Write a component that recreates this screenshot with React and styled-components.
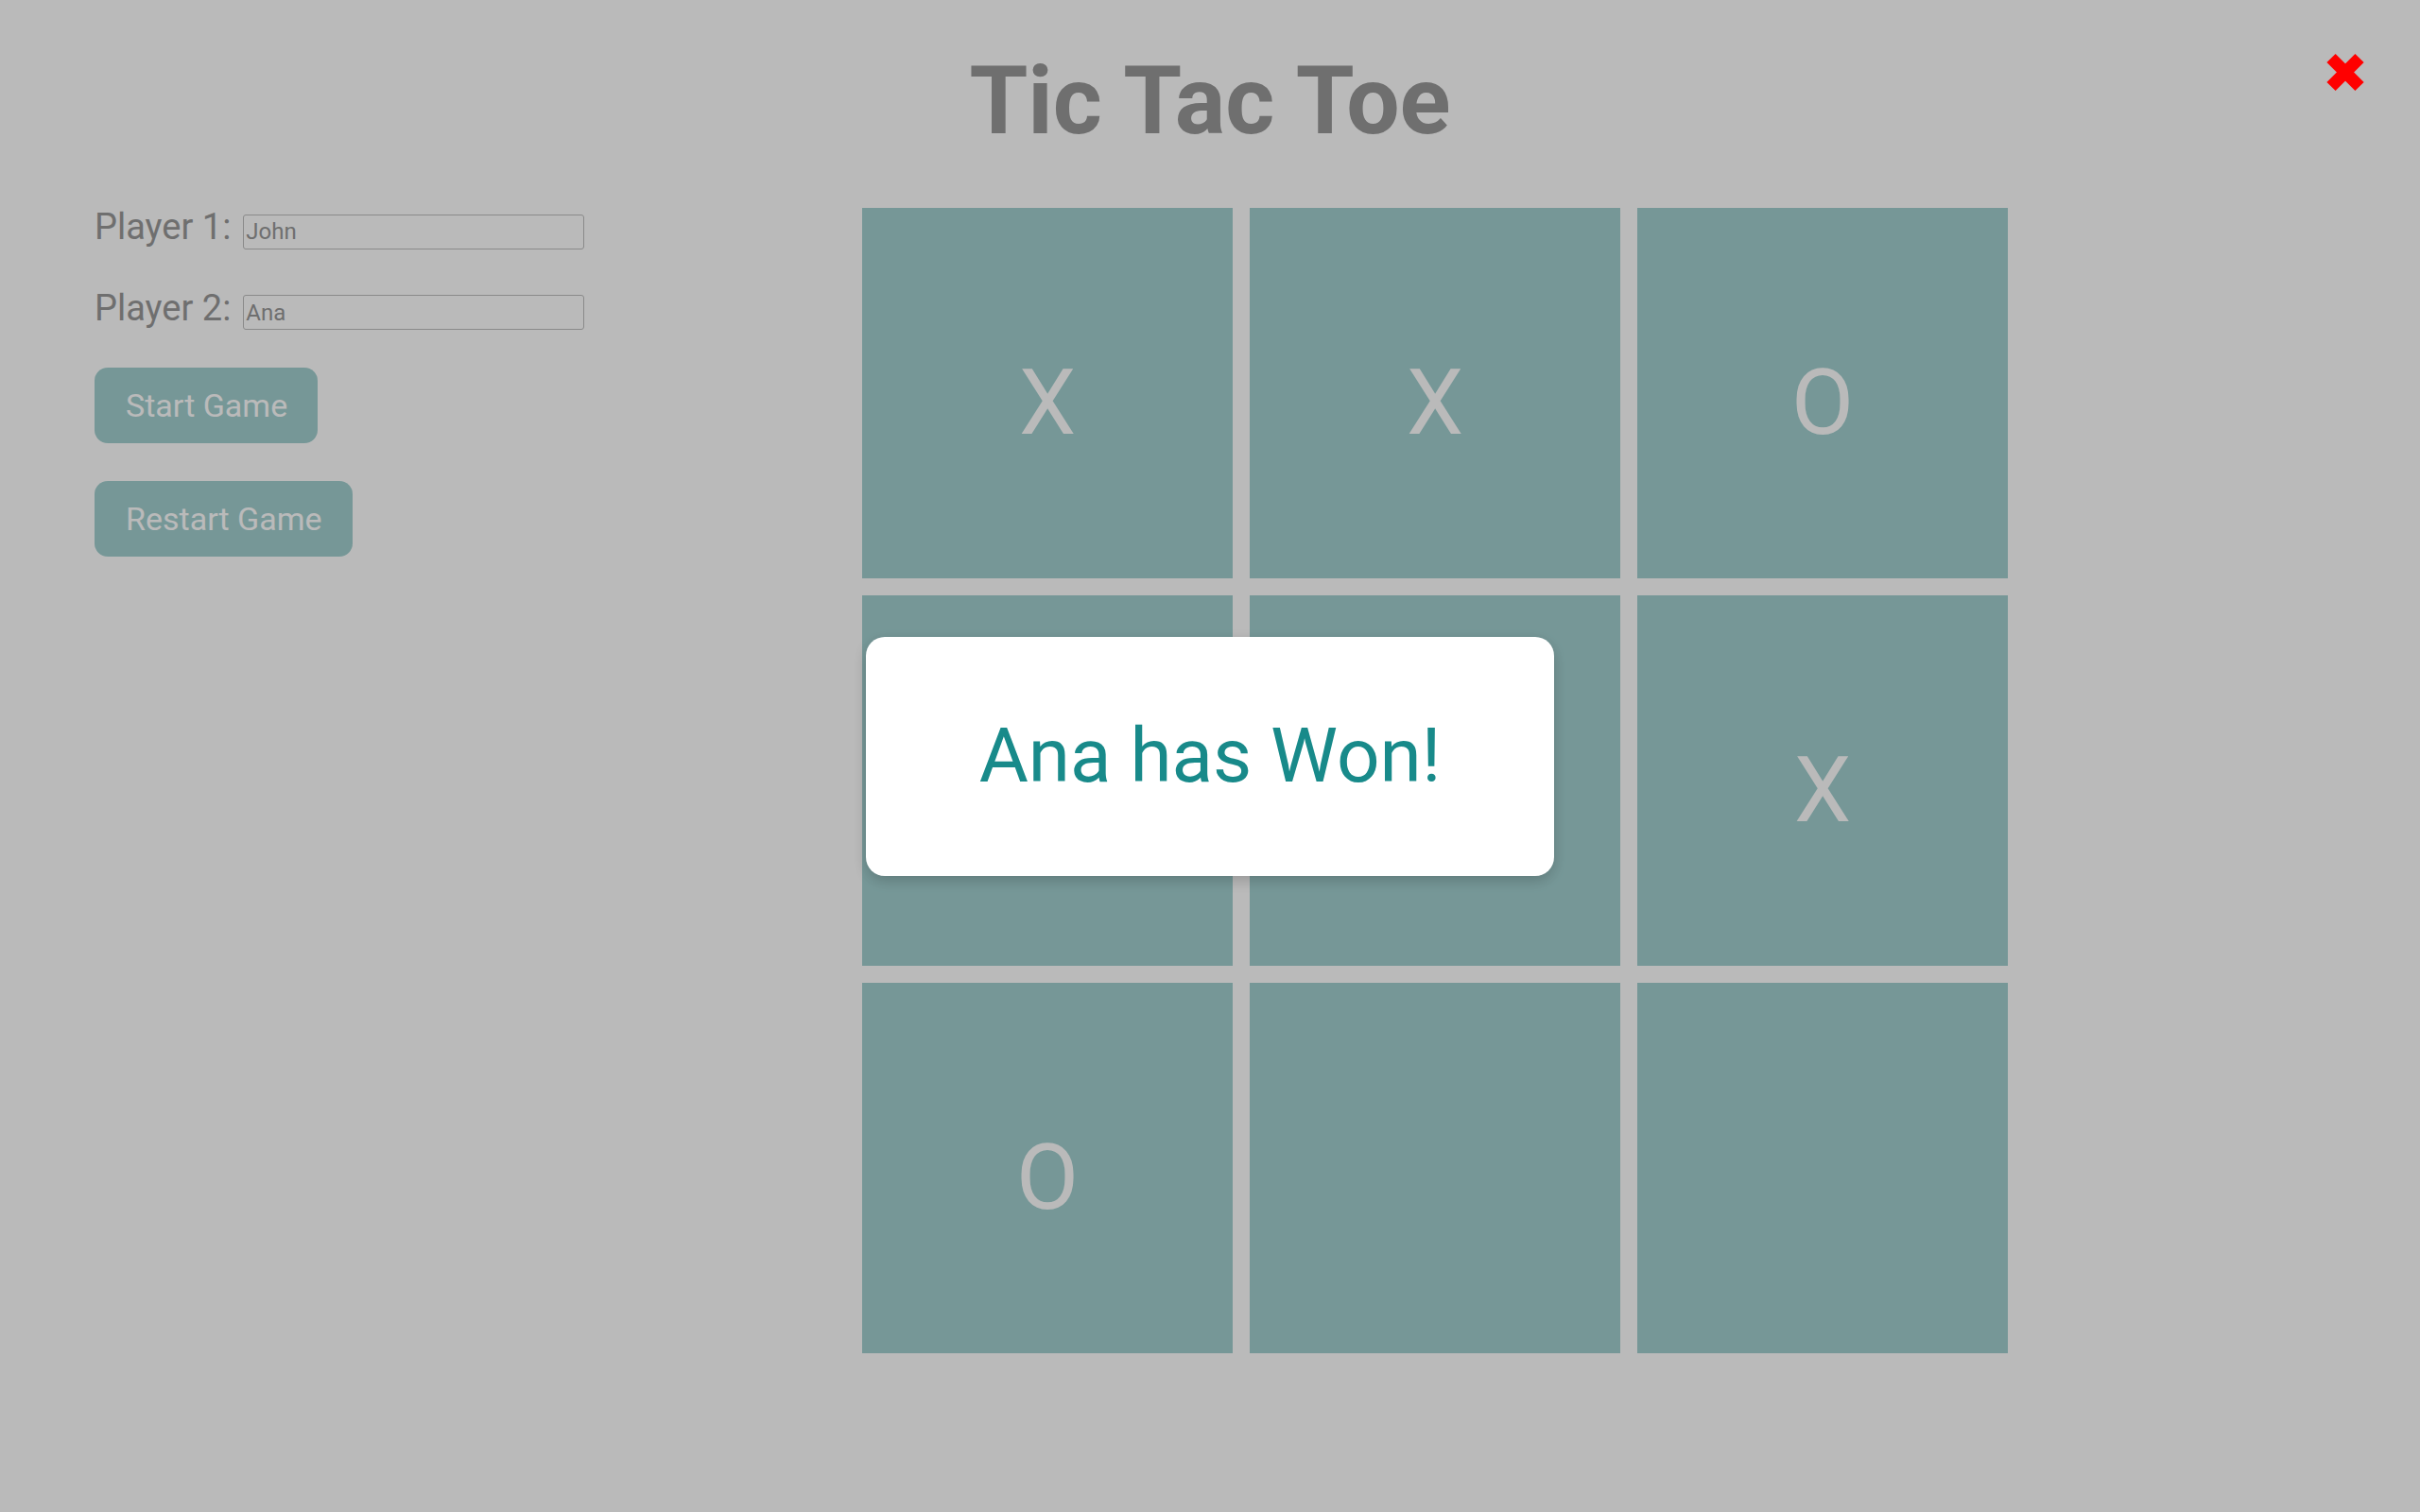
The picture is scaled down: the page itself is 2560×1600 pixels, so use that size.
import React, { useState } from "react";
import styled, { createGlobalStyle } from "styled-components";

const GlobalStyle = createGlobalStyle`
  html, body {
    margin: 0;
    padding: 0;
    background: #ffffff;
  }
  body {
    font-family: Roboto, "Noto Sans", Arial, sans-serif;
  }
`;

const Page = styled.div`
  min-height: 100vh;
`;

const Header = styled.header`
  display: flex;
  justify-content: center;
  padding-top: 48px;
`;

const Title = styled.h1`
  margin: 0;
  font-size: 100px;
  font-weight: 700;
  line-height: normal;
  color: #999999;
`;

const Main = styled.main`
  display: flex;
  align-items: flex-start;
  padding: 55px 0 0 100px;
`;

const Sidebar = styled.div`
  width: 812px;
  margin-top: -2px;
  display: flex;
  flex-direction: column;
  align-items: flex-start;
  gap: 40px;
`;

const PlayerRow = styled.div`
  display: flex;
  align-items: baseline;
  gap: 13px;
`;

const Label = styled.label`
  font-size: 38px;
  color: #999999;
`;

const NameInput = styled.input`
  box-sizing: border-box;
  width: 361px;
  height: 37px;
  padding: 3px 2px;
  border: 1px solid #bdbdbd;
  border-radius: 3px;
  background: transparent;
  font-family: Roboto, "Noto Sans", Arial, sans-serif;
  font-size: 24px;
  color: #999999;
  outline: none;
`;

const Button = styled.button`
  border: none;
  border-radius: 14px;
  padding: 20px 32px 20px 33px;
  background: #a2d0d0;
  color: #ffffff;
  font-family: Roboto, "Noto Sans", Arial, sans-serif;
  font-size: 34px;
  line-height: normal;
  cursor: pointer;
`;

const Board = styled.div`
  display: grid;
  grid-template-columns: repeat(3, 392px);
  grid-auto-rows: 392px;
  gap: 18px;
`;

const Cell = styled.div`
  box-sizing: border-box;
  display: flex;
  align-items: center;
  justify-content: center;
  padding-top: 20px;
  background: #a2d0d0;
  color: #ffffff;
  font-size: 96px;
`;

const Overlay = styled.div`
  position: fixed;
  inset: 0;
  background: rgba(0, 0, 0, 0.27);
  display: flex;
  align-items: center;
  justify-content: center;
`;

const Modal = styled.div`
  width: 728px;
  height: 253px;
  border-radius: 20px;
  background: #ffffff;
  box-shadow: 0 5px 16px rgba(0, 0, 0, 0.2);
  display: flex;
  align-items: center;
  justify-content: center;
  color: #188a8a;
  font-size: 80px;
`;

const CloseButton = styled.button`
  position: absolute;
  top: 55px;
  right: 58px;
  width: 42px;
  height: 43px;
  padding: 0;
  border: none;
  background: none;
  cursor: pointer;
`;

// centre square sits under the modal in the screenshot, left blank here
const board = ["X", "X", "O", "", "", "X", "O", "", ""];

export default function App() {
  const [players, setPlayers] = useState({ one: "John", two: "Ana" });
  const [showModal, setShowModal] = useState(true);

  return (
    <Page>
      <GlobalStyle />
      <Header>
        <Title>Tic Tac Toe</Title>
      </Header>
      <Main>
        <Sidebar>
          <PlayerRow>
            <Label>Player 1:</Label>
            <NameInput
              value={players.one}
              onChange={(e) => setPlayers({ ...players, one: e.target.value })}
            />
          </PlayerRow>
          <PlayerRow>
            <Label>Player 2:</Label>
            <NameInput
              value={players.two}
              onChange={(e) => setPlayers({ ...players, two: e.target.value })}
            />
          </PlayerRow>
          <Button>Start Game</Button>
          <Button>Restart Game</Button>
        </Sidebar>
        <Board>
          {board.map((v, i) => (
            <Cell key={i}>{v}</Cell>
          ))}
        </Board>
      </Main>

      {showModal ? (
        <Overlay>
          <CloseButton aria-label="Close modal" onClick={() => setShowModal(false)}>
            <svg width="42" height="43" viewBox="0 0 42 43">
              <line x1="6" y1="6.5" x2="36" y2="36.5" stroke="#ff0000" strokeWidth="13" />
              <line x1="36" y1="6.5" x2="6" y2="36.5" stroke="#ff0000" strokeWidth="13" />
            </svg>
          </CloseButton>
          <Modal>{players.two} has Won!</Modal>
        </Overlay>
      ) : null}
    </Page>
  );
}
